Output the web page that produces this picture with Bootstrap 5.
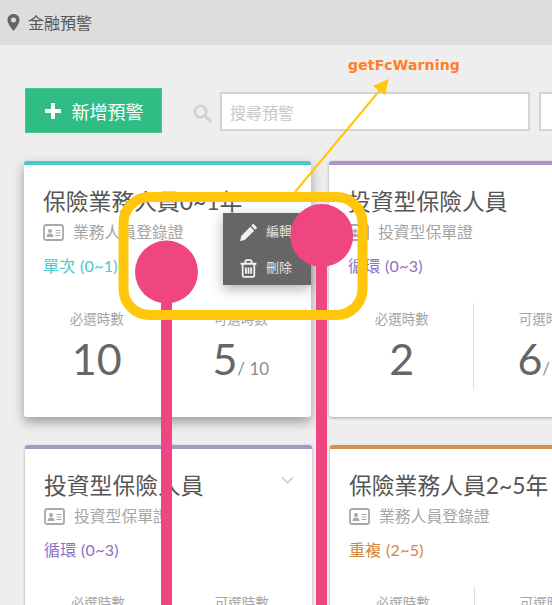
<!DOCTYPE html>
<html lang="zh-Hant">
<head>
  <meta charset="UTF-8" />
  <meta name="viewport" content="width=device-width, initial-scale=1.0"/>
  <title>金融預警</title>
  <link href="https://cdn.jsdelivr.net/npm/bootstrap@5.3.3/dist/css/bootstrap.min.css" rel="stylesheet"/>
  <style>
    html, body { height: 100%; }
    body {
      position: relative;
      overflow: hidden;
      background: #eee;
      color: #555;
      font-family: Lato, "Noto Sans CJK TC", sans-serif;
    }
    .top-bar { height: 45px; background: #ddd; padding-left: 7px; font-size: 16px; color: #555; }
    .tool-row { margin: 43px 0 28px 25px; width: 700px; }
    .add-btn {
      width: 137px; height: 45px; padding: 0;
      background: #2fbc85; border: 1px solid #4cc596; border-radius: 0;
      color: #fff; font-size: 18px; gap: 10px;
    }
    .find-icon { margin: 5px 0 0 31px; }
    .search-box {
      height: 39px; border: 2px solid #d4d4d4; border-radius: 0;
      font-size: 16px; padding: 2px 8px 0; color: #555; margin-top: 2px;
    }
    .search-box::placeholder { color: #c8c8c8; }
    .search-main { width: 310px; margin-left: 8px; }
    .search-next { width: 100px; margin-left: 9px; }
    .card-row { display: flex; gap: 18px; width: 700px; margin-left: 24px; }
    .card-row + .card-row { margin-top: 28px; margin-left: 25px; }
    .warn-card {
      position: relative; flex: 0 0 287px; height: 256px;
      border: 0; border-top: 4px solid #aaa; border-radius: 3px;
      background: #fff; box-shadow: 0 1px 3px rgba(0,0,0,.3);
      padding: 19px 0 0 19px;
    }
    .warn-card.raised { box-shadow: 0 5px 12px rgba(0,0,0,.35); }
    .teal { border-top-color: #4cc8c8; }
    .purple { border-top-color: #ab94c8; }
    .amber { border-top-color: #d3924e; }
    .card-name { font-size: 22.8px; line-height: 34px; font-weight: 400; color: #555; margin: 0 0 2px; white-space: nowrap; }
    .card-cert { font-size: 15.8px; line-height: 24px; color: #a5a5a5; gap: 9px; white-space: nowrap; }
    .card-cycle { font-size: 16px; line-height: 22px; margin-top: 11px; letter-spacing: .3px; }
    .teal .card-cycle { color: #4cc8c8; }
    .purple .card-cycle { color: #8c6fc6; }
    .amber .card-cycle { color: #d3873e; }
    .stat-row { position: absolute; left: 0; right: 0; top: 138px; }
    .stat-col { flex: 0 0 50%; height: 86px; text-align: center; padding-left: 2px; }
    .stat-col + .stat-col { border-left: 1px solid #ddd; }
    .stat-label { font-size: 13.5px; line-height: 20px; color: #a5a5a5; padding-top: 6px; box-sizing: content-box; }
    .stat-num { font-size: 43px; line-height: 52px; font-weight: 400; color: #666; margin-top: 4px; }
    .stat-num small { font-size: 17px; font-weight: 400; color: #8c8c8c; }
    .card-menu {
      position: absolute; left: 199px; top: 48px; width: 88px; height: 72px;
      background: #666; color: #e4e4e4; font-size: 13px;
      box-shadow: 0 4px 12px rgba(0,0,0,.3);
      padding: 1px 0 0 16px;
    }
    .card-menu div { height: 36px; gap: 8px; }
    .card-chevron { position: absolute; right: 18px; top: 27px; }
    .note-layer { position: absolute; left: 0; top: 0; }
    .note-label {
      position: absolute; left: 348px; top: 55px;
      font-family: "DejaVu Sans", sans-serif; font-weight: 700; font-size: 14px; line-height: 20px;
      letter-spacing: .15px; color: #ff7f27;
    }
  </style>
</head>
<body>

  <svg width="0" height="0" class="position-absolute">
    <symbol id="id-card" viewBox="0 0 21 17">
      <rect x="1" y="1" width="19" height="15" rx="2" fill="none" stroke="#a8a8a8" stroke-width="1.800"/>
      <circle cx="7" cy="7" r="2" fill="#a8a8a8"/>
      <path d="M3.500 13c0-2.500 1.500-3.500 3.500-3.500s3.500 1 3.500 3.500z" fill="#a8a8a8"/>
      <path d="M12.500 6.500h5M12.500 9h5M12.500 11.500h5" stroke="#a8a8a8" stroke-width="1"/>
    </symbol>
  </svg>

  <div class="top-bar d-flex align-items-center gap-2">
    <svg width="13" height="17" viewBox="0 0 13 17"><path fill="#666" fill-rule="evenodd" d="M6.500 0C3 0 .5 2.600.5 6c0 3.800 4 8.500 6 11 2-2.500 6-7.200 6-11 0-3.400-2.500-6-6-6zm0 3.500a2.500 2.500 0 1 1 0 5 2.500 2.500 0 0 1 0-5z"/></svg>
    <span>金融預警</span>
  </div>

  <div class="tool-row d-flex align-items-center">
    <button class="btn add-btn d-flex align-items-center justify-content-center" type="button">
      <svg width="18" height="18" viewBox="0 0 18 18"><path fill="#fff" d="M7 1h4v6h6v4h-6v6H7v-6H1V7h6z"/></svg>
      <span class="pt-1">新增預警</span>
    </button>
    <svg class="find-icon" width="19" height="19" viewBox="0 0 20 20"><circle cx="8" cy="8" r="6" fill="none" stroke="#d2d2d2" stroke-width="3"/><path d="M12.500 12.500l5.500 5.500" stroke="#d2d2d2" stroke-width="3.500" stroke-linecap="round"/></svg>
    <input class="form-control search-box search-main" type="text" placeholder="搜尋預警">
    <input class="form-control search-box search-next" type="text" placeholder="">
  </div>

  <div class="card-row">
    <div class="card warn-card raised teal">
      <h5 class="card-name">保險業務人員0~1年</h5>
      <div class="card-cert d-flex align-items-center"><svg width="21" height="17"><use href="#id-card"/></svg><span>業務人員登錄證</span></div>
      <div class="card-cycle">單次 (0~1)</div>
      <div class="stat-row d-flex">
        <div class="stat-col"><div class="stat-label">必選時數</div><div class="stat-num">10</div></div>
        <div class="stat-col"><div class="stat-label">可選時數</div><div class="stat-num">5<small>/ 10</small></div></div>
      </div>
      <div class="card-menu">
        <div class="d-flex align-items-center">
          <svg width="19" height="19" viewBox="0 0 18 18"><path fill="#f2f2f2" d="M13.500.8l3.700 3.700-1.900 1.900-3.700-3.700zM10.700 3.600l3.700 3.700-8.600 8.600-4.700 1.300 1-5z"/></svg>
          <span>編輯</span>
        </div>
        <div class="d-flex align-items-center">
          <svg width="19" height="19" viewBox="0 0 18 18"><path fill="none" stroke="#f2f2f2" stroke-width="1.700" d="M3.500 5.500v10.200c0 .8.500 1.300 1.300 1.300h8.400c.8 0 1.300-.5 1.300-1.300V5.500M1.500 4.500h15M6 4V2.500C6 1.600 6.500 1 7.400 1h3.200c.9 0 1.400.6 1.400 1.500V4M6.500 8v6M9 8v6M11.500 8v6"/></svg>
          <span>刪除</span>
        </div>
      </div>
    </div>
    <div class="card warn-card purple">
      <h5 class="card-name">投資型保險人員</h5>
      <div class="card-cert d-flex align-items-center"><svg width="21" height="17"><use href="#id-card"/></svg><span>投資型保單證</span></div>
      <div class="card-cycle">循環 (0~3)</div>
      <div class="stat-row d-flex">
        <div class="stat-col"><div class="stat-label">必選時數</div><div class="stat-num">2</div></div>
        <div class="stat-col"><div class="stat-label">可選時數</div><div class="stat-num">6<small>/ 10</small></div></div>
      </div>
    </div>
  </div>

  <div class="card-row">
    <div class="card warn-card purple">
      <h5 class="card-name">投資型保險人員</h5>
      <div class="card-cert d-flex align-items-center"><svg width="21" height="17"><use href="#id-card"/></svg><span>投資型保單證</span></div>
      <div class="card-cycle">循環 (0~3)</div>
      <svg class="card-chevron" width="13" height="9" viewBox="0 0 14 9"><path d="M1 1l6 6 6-6" fill="none" stroke="#c8c8c8" stroke-width="1.500"/></svg>
      <div class="stat-row d-flex">
        <div class="stat-col"><div class="stat-label">必選時數</div></div>
        <div class="stat-col"><div class="stat-label">可選時數</div></div>
      </div>
    </div>
    <div class="card warn-card amber">
      <h5 class="card-name">保險業務人員2~5年</h5>
      <div class="card-cert d-flex align-items-center"><svg width="21" height="17"><use href="#id-card"/></svg><span>業務人員登錄證</span></div>
      <div class="card-cycle">重複 (2~5)</div>
      <div class="stat-row d-flex">
        <div class="stat-col"><div class="stat-label">必選時數</div></div>
        <div class="stat-col"><div class="stat-label">可選時數</div></div>
      </div>
    </div>
  </div>

  <!-- annotation drawn over the page -->
  <svg class="note-layer" width="552" height="605" viewBox="0 0 552 605">
    <path d="M166.500 272V605M321.500 235V605" stroke="#ef4681" stroke-width="11"/>
    <circle cx="166.500" cy="272" r="31.500" fill="#ef4681"/>
    <circle cx="321.700" cy="235.500" r="31.500" fill="#ef4681"/>
    <rect x="123.500" y="197" width="239" height="118" rx="26" fill="none" stroke="#ffc60b" stroke-width="10"/>
    <path d="M295 192L380 90" stroke="#ffc60b" stroke-width="2"/>
    <path d="M388.700 79L373 86 385 95z" fill="#ffc60b"/>
  </svg>
  <span class="note-label">getFcWarning</span>

</body>
</html>
